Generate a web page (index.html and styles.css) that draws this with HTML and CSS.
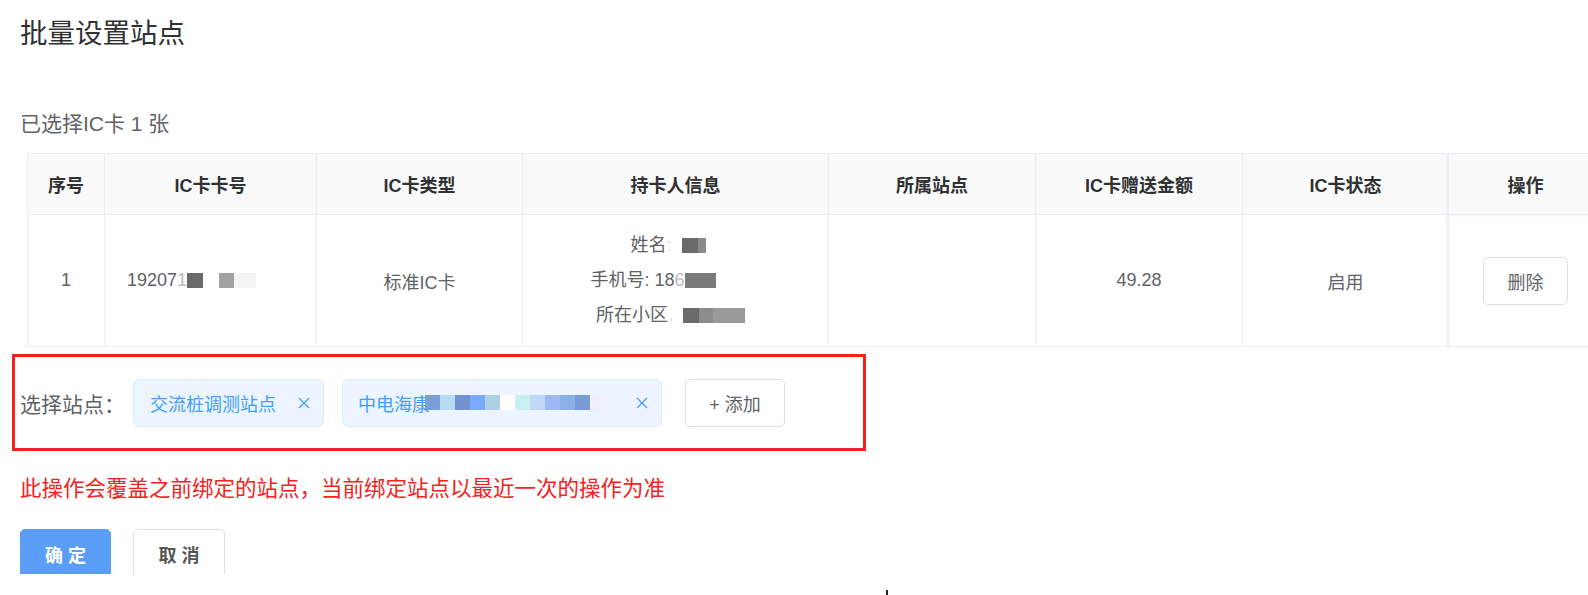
FILE: index.html
```html
<!DOCTYPE html>
<html lang="zh-CN">
<head>
    <meta charset="UTF-8">
    <meta name="viewport" content="width=device-width, initial-scale=1.0">
    <title>批量设置站点</title>
    <link rel="stylesheet" href="styles.css">
</head>
<body>
    <div class="dialog">
        <h2 class="title">批量设置站点</h2>

        <div class="selected">已选择IC卡 1 张</div>

        <div class="table-wrap">
            <table class="card-table">
                <colgroup>
                    <col style="width: 77px">
                    <col style="width: 212px">
                    <col style="width: 206px">
                    <col style="width: 306px">
                    <col style="width: 207px">
                    <col style="width: 207px">
                    <col style="width: 206px">
                    <col style="width: 154px">
                </colgroup>
                <thead>
                    <tr>
                        <th>序号</th>
                        <th>IC卡卡号</th>
                        <th>IC卡类型</th>
                        <th>持卡人信息</th>
                        <th>所属站点</th>
                        <th>IC卡赠送金额</th>
                        <th>IC卡状态</th>
                        <th class="fixed">操作</th>
                    </tr>
                </thead>
                <tbody>
                    <tr>
                        <td>1</td>
                        <td>
                            <span class="line">19207<span class="cut">1</span><span class="px dark" style="width: 16px"></span><span class="px" style="width: 16px; background: #fff"></span><span class="px" style="width: 15px; background: #a2a2a2"></span><span class="px" style="width: 22px; background: #f4f4f4"></span><span class="px" style="width: 38px; background: transparent"></span></span>
                        </td>
                        <td>标准IC卡</td>
                        <td class="holder">
                            <div class="line">姓名<span class="faint">:</span><span class="gap"></span><span class="px dark" style="width: 16px"></span><span class="px" style="width: 8px; background: #8a8a8a"></span><span class="px" style="width: 15px; background: transparent"></span></div>
                            <div class="line">手机号: 18<span class="cut">6</span><span class="px" style="width: 31px; background: #7a7a7a"></span><span class="px" style="width: 45px; background: transparent"></span></div>
                            <div class="line">所在小区<span class="faint">.</span><span class="gap"></span><span class="px dark" style="width: 16px"></span><span class="px" style="width: 14px; background: #8c8c8c"></span><span class="px" style="width: 32px; background: #999"></span><span class="px" style="width: 10px; background: transparent"></span></div>
                        </td>
                        <td></td>
                        <td>49.28</td>
                        <td>启用</td>
                        <td class="fixed"><button class="btn-small">删除</button></td>
                    </tr>
                </tbody>
            </table>
        </div>

        <div class="site-row">
            <label class="site-label">选择站点：</label>
            <span class="tag">
                交流桩调测站点
                <svg class="tag-close" viewBox="0 0 12 12"><path d="M1 1L11 11M11 1L1 11"/></svg>
            </span>
            <span class="tag tag-second">
                中电海康<span class="mosaic"><i style="background: #7b9ed9"></i><i style="background: #b8dcf5"></i><i style="background: #7191d0"></i><i style="background: #7aa9ff"></i><i style="background: #acd0e6"></i><i style="background: #fff"></i><i style="background: #c8f0f0"></i><i style="background: #c0d6fb"></i><i style="background: #9db8f5"></i><i style="background: #8ab0e6"></i><i style="background: #789cd6"></i><i style="background: #f0f0fc"></i></span>
                <svg class="tag-close far" viewBox="0 0 12 12"><path d="M1 1L11 11M11 1L1 11"/></svg>
            </span>
            <button class="add-btn">+ 添加</button>
        </div>

        <p class="warning">此操作会覆盖之前绑定的站点，当前绑定站点以最近一次的操作为准</p>

        <div class="footer">
            <button class="btn btn-primary">确 定</button>
            <button class="btn btn-default">取 消</button>
        </div>
    </div>
    <span class="cursor"></span>
</body>
</html>
```

FILE: styles.css
```css
body {
    margin: 0;
    padding: 0;
    background-color: #fff;
    font-family: "Helvetica Neue", "Liberation Sans", "Noto Sans CJK SC", sans-serif;
    color: #606266;
}

.dialog {
    width: 1588px;
    box-sizing: border-box;
    padding: 16px 0 0 20px;
    overflow: hidden;
}

.title {
    margin: 0;
    font-size: 27.5px;
    line-height: 36px;
    font-weight: normal;
    color: #303133;
}

.selected {
    margin-top: 57px;
    font-size: 21px;
    line-height: 30px;
    color: #606266;
}

.table-wrap {
    margin: 14px 0 0 7px;
}

.card-table {
    width: 1575px;
    table-layout: fixed;
    border-collapse: collapse;
    border-top: 1px solid #ebeef5;
}

.card-table th,
.card-table td {
    border: 1px solid #ebeef5;
    padding: 0;
    text-align: center;
    font-size: 18px;
}

.card-table th {
    height: 60px;
    background-color: #fafafa;
    color: #303133;
    font-weight: bold;
}

.card-table td {
    height: 131px;
    color: #606266;
}

.card-table .fixed {
    border-left: 1px solid #e4e8f0;
    box-shadow: -2px 0 2px rgba(210, 216, 228, 0.5);
}

.line {
    display: block;
    line-height: 35px;
    white-space: nowrap;
}

.px {
    display: inline-block;
    height: 15px;
    vertical-align: -2px;
}

.px.dark {
    background: #6a6a6a;
}

.cut {
    color: #bbb;
}

.faint {
    color: #ddd;
}

.gap {
    display: inline-block;
    width: 10px;
}

.btn-small {
    width: 85px;
    height: 48px;
    border: 1px solid #dcdfe6;
    border-radius: 5px;
    background: #fff;
    color: #606266;
    font-family: inherit;
    font-size: 18px;
    cursor: pointer;
}

.site-row {
    display: flex;
    align-items: center;
    width: 854px;
    height: 97px;
    box-sizing: border-box;
    margin: 7px 0 0 -8px;
    padding-left: 5px;
    border: 3px solid #f52020;
}

.site-label {
    width: 113px;
    font-size: 21px;
    color: #606266;
}

.tag {
    display: inline-flex;
    align-items: center;
    height: 48px;
    box-sizing: border-box;
    padding: 0 13px 0 16px;
    border: 1px solid #d9ecff;
    border-radius: 6px;
    background-color: #ecf5ff;
    color: #409eff;
    font-size: 18px;
    white-space: nowrap;
}

.tag-second {
    margin-left: 18px;
    padding-left: 15px;
}

.tag-close {
    width: 12px;
    height: 12px;
    margin-left: 22px;
    fill: none;
    stroke: #409eff;
    stroke-width: 1.2;
}

.tag-close.far {
    margin-left: 31px;
}

.mosaic {
    display: inline-flex;
    margin-left: -5px;
}

.mosaic i {
    display: block;
    width: 15px;
    height: 15px;
}

.add-btn {
    width: 100px;
    height: 48px;
    margin-left: 23px;
    border: 1px solid #dcdfe6;
    border-radius: 5px;
    background: #fff;
    color: #606266;
    font-family: inherit;
    font-size: 18px;
    cursor: pointer;
}

.warning {
    margin: 23px 0 0;
    font-size: 21.5px;
    line-height: 30px;
    color: #f52222;
}

.footer {
    display: flex;
    gap: 22px;
    height: 45px;
    margin-top: 25px;
    overflow: hidden;
}

.btn {
    height: 50px;
    border-radius: 5px;
    font-family: inherit;
    font-size: 18px;
    font-weight: bold;
    cursor: pointer;
}

.btn-primary {
    width: 91px;
    border: 1px solid #5a9ef8;
    background-color: #5a9ef8;
    color: #fff;
}

.btn-default {
    width: 92px;
    border: 1px solid #dcdfe6;
    background-color: #fff;
    color: #555;
}

.cursor {
    position: absolute;
    left: 886px;
    top: 590px;
    width: 2px;
    height: 5px;
    background: #222;
}
```
